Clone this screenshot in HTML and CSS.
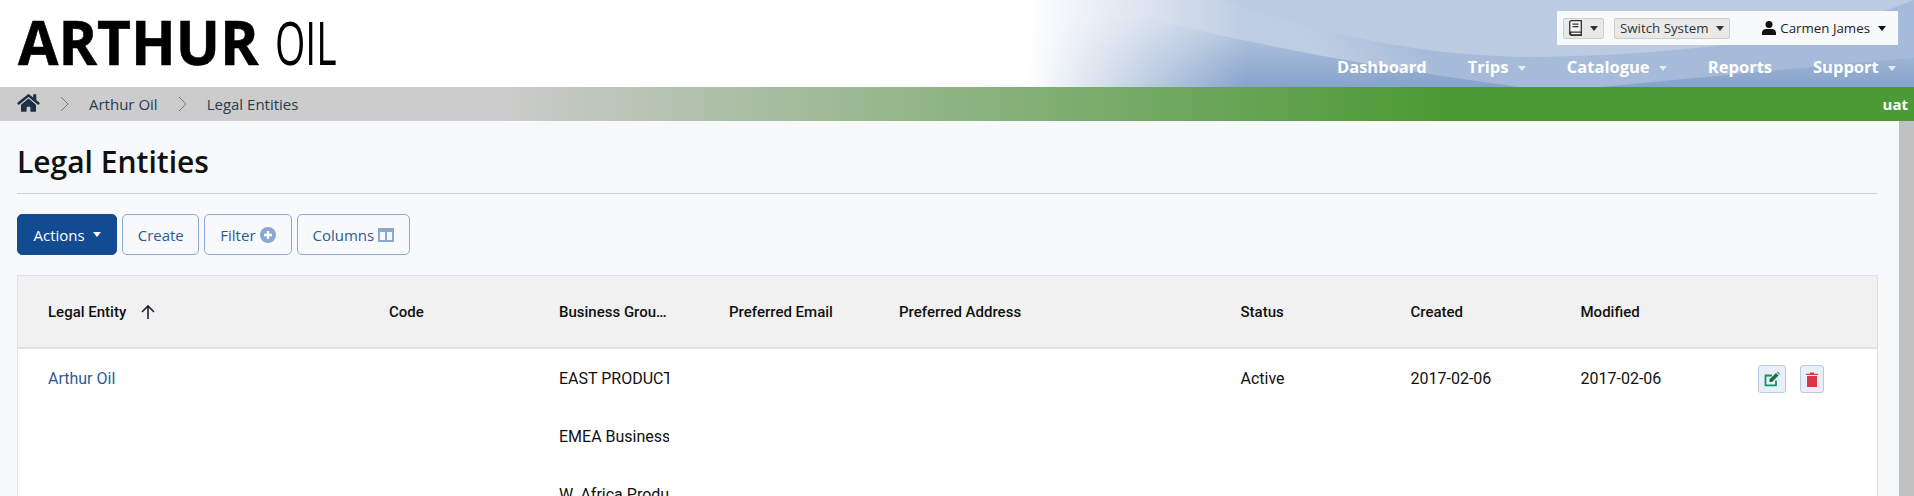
FILE: index.html
```html
<!DOCTYPE html>
<html lang="en">
<head>
  <meta charset="UTF-8">
  <title>Legal Entities | Arthur Oil</title>
  <link rel="stylesheet" href="styles.css">
</head>
<body>

  <div class="header">
    <svg class="header-bg" viewBox="0 0 914 87" preserveAspectRatio="none">
      <defs>
        <linearGradient id="waveBase" x1="0" y1="0" x2="0" y2="1">
          <stop offset="0.2" stop-color="#bccce2"/>
          <stop offset="1" stop-color="#86a3ca"/>
        </linearGradient>
        <linearGradient id="waveBand" gradientUnits="userSpaceOnUse" x1="400" y1="20" x2="340" y2="70">
          <stop offset="0" stop-color="#a6bbd9"/>
          <stop offset="1" stop-color="#bdcde2"/>
        </linearGradient>
        <linearGradient id="waveFade" x1="0" y1="0" x2="1" y2="0">
          <stop offset="0.03" stop-color="#fff"/>
          <stop offset="0.27" stop-color="#fff" stop-opacity="0"/>
        </linearGradient>
      </defs>
      <rect width="914" height="87" fill="url(#waveBase)"/>
      <path d="M87 0C187 32 337 62 520 87L600 87C700 78 800 67 914 58V0Z" fill="url(#waveBand)"/>
      <path d="M223 0C300 25 400 57 540 57C700 54 830 35 914 0Z" fill="#bacbe2"/>
      <rect width="914" height="87" fill="url(#waveFade)"/>
    </svg>
    <div class="logo"><b>ARTHUR</b><span>OIL</span></div>
    <div class="header-right">
      <div class="user-box">
        <button class="sys-btn">
          <svg class="book-icon" viewBox="0 0 13 16"><path d="M2.500.700h9.800v14.600H2.500A1.800 1.800 0 0 1 .7 13.500V2.500A1.800 1.800 0 0 1 2.500.700z" fill="#f4f4f4" stroke="#333" stroke-width="1.300"/><path d="M1 11.500h11v1.300H2.500a.9.9 0 0 0 0 1.400H12v1H2A1.500 1.500 0 0 1 1 13.500z" fill="#333"/><path d="M3.500 3.500h6v1.200h-6zM3.500 6h6v1.200h-6z" fill="#333"/></svg>
          <i class="caret"></i>
        </button>
        <button class="sys-btn">Switch System <i class="caret"></i></button>
        <div class="user-name">
          <svg class="user-icon" viewBox="0 0 14 14"><circle cx="7" cy="3.600" r="3.500" fill="#111"/><path d="M0 14v-2c0-2.500 2-4 4-4h6c2 0 4 1.500 4 4v2z" fill="#111"/></svg>
          Carmen James <i class="caret"></i>
        </div>
      </div>
      <div class="nav">
        <a>Dashboard</a>
        <a>Trips <i class="caret"></i></a>
        <a>Catalogue <i class="caret"></i></a>
        <a>Reports</a>
        <a>Support <i class="caret"></i></a>
      </div>
    </div>
  </div>

  <div class="crumbs">
    <svg class="home-icon" viewBox="0 0 576 512"><path d="M280 148 96 300v164c0 9 7 16 16 16l112-.300c9 0 16-7 16-16V368c0-9 7-16 16-16h64c9 0 16 7 16 16v96c0 9 7 16 16 16l112 .300c9 0 16-7 16-16V300L296 148c-4-4-12-4-16 0zM572 251l-84-69V44c0-7-5-12-12-12h-56c-7 0-12 5-12 12v72l-90-74c-18-14-43-14-61 0L4 251c-5 4-6 12-2 17l26 31c4 5 12 6 17 2L280 107c4-4 12-4 16 0l235 194c5 4 13 3 17-2l26-31c4-5 3-13-2-17z" fill="#1e3046"/></svg>
    <svg class="crumb-sep" viewBox="0 0 9 16"><path d="M1 1l7 7-7 7" fill="none" stroke="#777"/></svg>
    <span>Arthur Oil</span>
    <svg class="crumb-sep" viewBox="0 0 9 16"><path d="M1 1l7 7-7 7" fill="none" stroke="#777"/></svg>
    <span>Legal Entities</span>
    <b class="env">uat</b>
  </div>

  <div class="content">
    <h1>Legal Entities</h1>
    <div class="toolbar">
      <button class="btn btn-primary">Actions <i class="caret"></i></button>
      <button class="btn btn-create">Create</button>
      <button class="btn">Filter
        <svg class="btn-icon" viewBox="0 0 16 16"><circle cx="8" cy="8" r="8" fill="#8aa8d0"/><path d="M8 4v8M4 8h8" stroke="#fff" stroke-width="2.400"/></svg>
      </button>
      <button class="btn">Columns
        <svg class="btn-icon" viewBox="0 0 16 14"><path d="M0 0h16v14H0zM2 4v8h5V4zM9 4v8h5V4z" fill="#8aa8d0" fill-rule="evenodd"/></svg>
      </button>
    </div>

    <table class="grid">
      <colgroup>
        <col class="col-wide"><col class="col"><col class="col"><col class="col">
        <col class="col-wide"><col class="col"><col class="col"><col class="col"><col>
      </colgroup>
      <thead>
        <tr>
          <th>Legal Entity
            <svg class="sort-icon" viewBox="0 0 16 16"><path d="M8 15V2M2 8l6-6 6 6" fill="none" stroke="#1a2433" stroke-width="1.600"/></svg>
          </th>
          <th>Code</th>
          <th><div class="clip ellipsis">Business Group(s)</div></th>
          <th>Preferred Email</th>
          <th>Preferred Address</th>
          <th>Status</th>
          <th>Created</th>
          <th>Modified</th>
          <th></th>
        </tr>
      </thead>
      <tbody>
        <tr>
          <td><a class="link">Arthur Oil</a></td>
          <td></td>
          <td>
            <div class="clip group">EAST PRODUCTION</div>
            <div class="clip group">EMEA Business Unit</div>
            <div class="clip group">W. Africa Production</div>
          </td>
          <td></td>
          <td></td>
          <td>Active</td>
          <td>2017-02-06</td>
          <td>2017-02-06</td>
          <td>
            <div class="row-actions">
              <button class="icon-btn">
                <svg viewBox="0 0 16 16"><path d="M12 9.500v4.800H1.500V4.500h6.500" fill="none" stroke="#0f9468" stroke-width="1.800"/><path d="M5.500 8.500 12 2l2.500 2.500L8 11H5.500z" fill="#14703f"/><path d="M12.800 1.200l.8-.8 2.300 2.300-.8.800z" fill="#0f9468"/></svg>
              </button>
              <button class="icon-btn">
                <svg viewBox="0 0 12 15"><path d="M0 1.800h12v1.200H0zM4 .5h4v1.300H4zM1 4h10v11H1z" fill="#dc3545"/></svg>
              </button>
            </div>
          </td>
        </tr>
      </tbody>
    </table>
  </div>

  <div class="scrollbar"></div>

</body>
</html>
```

FILE: styles.css
```css
html, body {
  height: 100%;
}
body {
  margin: 0;
  overflow: hidden;
  background: #f8f9fa;
  color: #111;
  font-family: 'Open Sans', Arial, sans-serif;
}
.caret {
  display: inline-block;
  width: 0;
  height: 0;
  margin-left: 4px;
  vertical-align: 2px;
  border-top: 5px solid currentColor;
  border-left: 4.5px solid transparent;
  border-right: 4.5px solid transparent;
}

/* header */
.header {
  position: relative;
  height: 87px;
  background: #fff;
  display: flex;
  justify-content: space-between;
  overflow: hidden;
}
.header-bg {
  position: absolute;
  top: 0;
  right: 0;
  width: 914px;
  height: 87px;
}
.logo {
  position: relative;
  margin: 4px 0 0 18px;
  font-size: 61px;
  line-height: 76px;
  white-space: nowrap;
  color: #000;
}
.logo b, .logo span {
  display: inline-block;
  transform-origin: left center;
}
.logo b {
  font-weight: 700;
  transform: scaleX(0.96);
  margin-right: 6px;
  -webkit-text-stroke: 0.6px #000;
}
.logo span {
  font-weight: 400;
  transform: scaleX(0.64);
}
.header-right {
  position: relative;
  display: flex;
  flex-direction: column;
  align-items: flex-end;
  padding: 11px 16px 0 0;
}
.user-box {
  width: 341px;
  height: 34px;
  box-sizing: border-box;
  padding: 0 12px 0 6px;
  background: #f8f9fa;
  display: flex;
  align-items: center;
  font-size: 13.300px;
}
.sys-btn {
  height: 21px;
  margin-right: 10px;
  padding: 0 5px;
  display: flex;
  align-items: center;
  background: #e9e9e9;
  border: 1px solid #ccc;
  border-radius: 2px;
  font: inherit;
  color: #333;
}
.sys-btn .caret {
  margin-left: 8px;
  color: #333;
}
.book-icon {
  width: 13px;
  height: 16px;
}
.user-name {
  margin-left: auto;
  display: flex;
  align-items: center;
  gap: 4px;
  color: #222;
}
.user-name .caret {
  margin-left: 4px;
  color: #111;
}
.user-icon {
  width: 14px;
  height: 14px;
}
.nav {
  margin: 9px 2px 0 0;
  display: flex;
  gap: 41px;
  font-size: 16.500px;
  font-weight: 700;
  line-height: 26px;
  color: #fff;
}
.nav .caret {
  margin-left: 5px;
  color: #e4ebf5;
}

/* breadcrumb strip */
.crumbs {
  height: 34px;
  padding: 0 6px 0 17px;
  display: flex;
  align-items: center;
  gap: 20px;
  font-size: 15px;
  color: #2b3a4d;
  background: linear-gradient(90deg, #ccc 26%, #4c9a35 75%);
}
.home-icon {
  width: 23px;
  height: 20px;
  margin-top: -3px;
}
.crumb-sep {
  width: 9px;
  height: 16px;
}
.env {
  margin-left: auto;
  font-size: 15px;
  color: #fff;
}

/* page content */
.content {
  padding: 0 36px 0 17px;
}
h1 {
  margin: 0;
  padding: 21px 0 12px;
  font-size: 30px;
  font-weight: 600;
  line-height: 39px;
  color: #111;
  border-bottom: 1px solid #ced4da;
}
.toolbar {
  margin-top: 20px;
  display: flex;
  gap: 5px;
}
.btn {
  height: 41px;
  padding: 0 15px;
  display: flex;
  align-items: center;
  gap: 4px;
  background: transparent;
  border: 1px solid #8ea9d0;
  border-radius: 5px;
  font: inherit;
  font-size: 15px;
  color: #2d5a97;
}
.btn-primary {
  padding: 0 15.500px;
  background: #134b93;
  border-color: #134b93;
  color: #fff;
}
.btn-primary .caret {
  margin-left: 4px;
  vertical-align: 0;
}
.btn-create {
  padding: 0 14.500px;
}
.btn-icon {
  width: 16px;
  height: 16px;
}

/* table */
.grid {
  width: 100%;
  margin-top: 20px;
  table-layout: fixed;
  border-collapse: collapse;
  background: #fff;
  border: 1px solid #dee2e6;
  font-family: Roboto, Arial, sans-serif;
  font-size: 16px;
}
.col-wide {
  width: 341.500px;
}
.col {
  width: 170px;
}
.grid th {
  height: 71px;
  padding: 0 30px;
  text-align: left;
  font-size: 15px;
  font-weight: 500;
  background: #f1f1f1;
  border-bottom: 2px solid #e2e2e2;
  white-space: nowrap;
}
.grid td {
  padding: 18px 30px 0;
  vertical-align: top;
  line-height: 23px;
  white-space: nowrap;
}
.sort-icon {
  width: 16px;
  height: 16px;
  margin-left: 10px;
  vertical-align: -3px;
}
.clip {
  overflow: hidden;
}
.ellipsis {
  text-overflow: ellipsis;
}
.group {
  margin-bottom: 35px;
}
.link {
  color: #2d5a97;
}
.row-actions {
  display: flex;
  gap: 14px;
  margin: -2px 0 0 7px;
}
.icon-btn {
  height: 28px;
  padding: 0 5px;
  display: flex;
  align-items: center;
  background: #e9eff7;
  border: 1px solid #b8cbe3;
  border-radius: 3px;
}
.icon-btn svg {
  width: 16px;
  height: 16px;
}
.icon-btn + .icon-btn svg {
  width: 12px;
  height: 15px;
}

.scrollbar {
  position: absolute;
  top: 121px;
  right: 0;
  bottom: 0;
  width: 15px;
  background: #c1c1c1;
}
```
